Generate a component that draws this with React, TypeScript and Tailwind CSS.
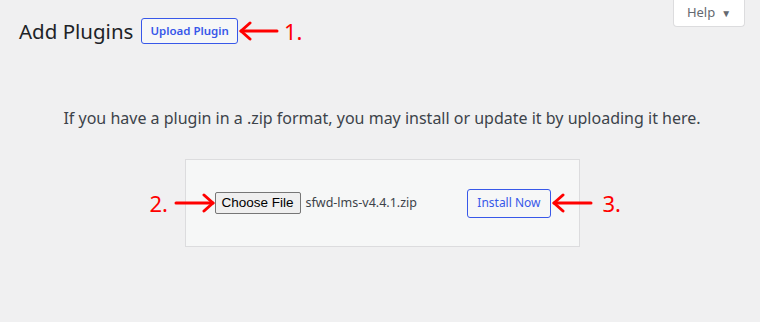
import { ReactNode } from "react";

// red annotation arrow, points left or right
function Arrow({ dir, width }: { dir: "left" | "right"; width: number }) {
  const h = 20;
  const mid = h / 2;
  const tip = dir === "right" ? width - 2 : 2;
  const back = dir === "right" ? width - 11 : 11;
  return (
    <svg width={width} height={h} viewBox={`0 0 ${width} ${h}`} className="block">
      <line x1={2} y1={mid} x2={width - 2} y2={mid} stroke="#ff0000" strokeWidth={3} strokeLinecap="round" />
      <polyline
        points={`${back},${mid - 8} ${tip},${mid} ${back},${mid + 8}`}
        fill="none"
        stroke="#ff0000"
        strokeWidth={3}
        strokeLinecap="round"
        strokeLinejoin="round"
      />
    </svg>
  );
}

function Mark({ children }: { children: ReactNode }) {
  return <span className="text-[22px] leading-none text-[#ff0000]">{children}</span>;
}

export default function App() {
  return (
    <div className="relative w-[760px] h-[322px] bg-[#f0f0f1] font-['Noto_Sans',sans-serif] text-[#3c434a] overflow-hidden">
      {/* help tab */}
      <div className="absolute right-[15px] top-0 w-[72px] h-[27px] bg-white border border-t-0 border-[#dcdcde] rounded-b-[4px] flex items-center justify-center gap-[6px] text-[13px] text-[#646970]">
        <span>Help</span>
        <span className="text-[10px]">▼</span>
      </div>

      <div className="pl-[19px] pr-[15px]">
        <div className="flex items-center pt-[16px] h-[46px]">
          <h1 className="text-[20.5px] font-normal text-[#1d2327] leading-[30px]">Add Plugins</h1>
          <button className="ml-[8px] h-[26px] px-[8px] border border-[#3858e9] rounded-[3px] bg-[#f6f7f7] text-[11.5px] font-semibold text-[#3858e9] leading-none">
            Upload Plugin
          </button>
          <div className="ml-[1px] flex items-center gap-[5px]">
            <Arrow dir="left" width={40} />
            <Mark>1.</Mark>
          </div>
        </div>

        <p className="mt-[62px] text-center text-[16px] leading-[20px] text-[#3c434a]">
          If you have a plugin in a .zip format, you may install or update it by uploading it here.
        </p>

        <div className="relative mx-auto mt-[31px] w-[395px] h-[88px] border border-[#dcdcde] bg-[#f6f7f7] flex items-center pl-[29px] pr-[28px]">
          <div className="absolute left-[-36px] top-[32px]">
            <Mark>2.</Mark>
          </div>
          <div className="absolute left-[-12px] top-[33px]">
            <Arrow dir="right" width={41} />
          </div>
          <button className="h-[22px] px-[6px] border border-[#767676] rounded-[2px] bg-[#efefef] text-[13.5px] leading-none text-black font-['Liberation_Sans',sans-serif]">
            Choose File
          </button>
          <span className="ml-[5px] text-[12.5px] text-[#3c434a]">sfwd-lms-v4.4.1.zip</span>
          <button className="ml-auto h-[29px] px-[9px] border border-[#3858e9] rounded-[3px] bg-[#f6f7f7] text-[12px] text-[#3858e9] leading-none">
            Install Now
          </button>
          <div className="absolute left-[366px] top-[33px]">
            <Arrow dir="left" width={41} />
          </div>
          <div className="absolute left-[417px] top-[32px]">
            <Mark>3.</Mark>
          </div>
        </div>
      </div>
    </div>
  );
}
